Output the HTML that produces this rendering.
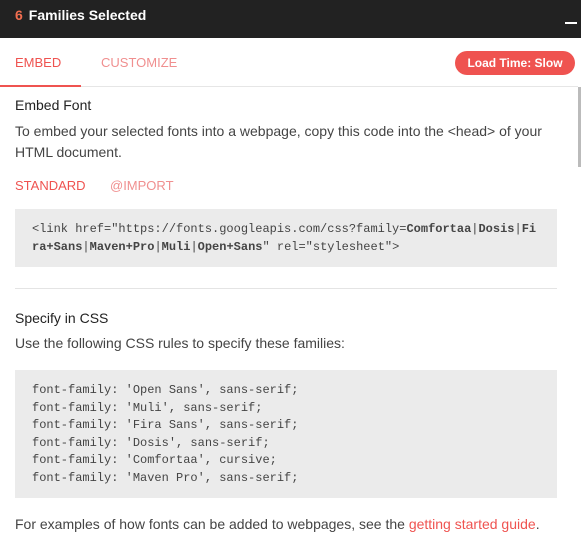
<!DOCTYPE html>
<html><head><style>
body{margin:0;width:581px;height:552px;overflow:hidden;background:#fff;font-family:"Liberation Sans",sans-serif;color:#333;position:relative}
.hd{position:absolute;left:0;top:0;width:581px;height:38px;background:#222}
.hd .t{position:absolute;left:15px;top:7px;color:#fff;font-weight:bold;font-size:14px}
.hd .t b{color:#f26e50;margin-right:6px}
.hd .m{position:absolute;left:565px;top:22px;width:12px;height:2px;background:#fff}
.tabs{position:absolute;top:38px;left:0;width:578px;height:48px;border-bottom:1px solid #e6e6e6}
.tab{position:absolute;top:17px;font-size:13px;color:#ef5350}
.ul{position:absolute;left:0;top:85px;width:81px;height:2px;background:#ef5350}
.pill{position:absolute;left:455px;top:51px;width:120px;height:24px;border-radius:12px;background:#ef5350;color:#fff;font-weight:bold;font-size:12px;text-align:center;line-height:24px}
.sb{position:absolute;left:578px;top:87px;width:3px;height:80px;background:#bbb}
.h{position:absolute;left:15px;font-size:14px;color:#222}
.p{position:absolute;left:15px;font-size:14px;color:#444;line-height:21px}
.code{position:absolute;left:15px;width:542px;background:#ebebeb;font-family:"Liberation Mono",monospace;font-size:12px;color:#444;box-sizing:border-box;padding-left:17px;line-height:17.5px;white-space:pre}
</style></head><body>
<div class="hd"><div class="t"><b>6</b>Families Selected</div><div class="m"></div></div>
<div class="tabs"><div class="tab" style="left:15px">EMBED</div><div class="tab" style="left:101px;color:#f08f8f">CUSTOMIZE</div></div>
<div class="ul"></div>
<div class="pill">Load Time: Slow</div>
<div class="sb"></div>
<div class="h" style="top:97px">Embed Font</div>
<div class="p" style="top:121px;width:545px">To embed your selected fonts into a webpage, copy this code into the &lt;head&gt; of your HTML document.</div>
<div class="tab" style="position:absolute;left:15px;top:178px;font-size:13px;color:#ef5350">STANDARD</div>
<div class="tab" style="position:absolute;left:110px;top:178px;font-size:13px;color:#f08f8f">@IMPORT</div>
<div class="code" style="top:209px;height:58px;padding-top:12px">&lt;link href="https://fonts.googleapis.com/css?family=<b>Comfortaa</b>|<b>Dosis</b>|<b>Fi</b>
<b>ra+Sans</b>|<b>Maven+Pro</b>|<b>Muli</b>|<b>Open+Sans</b>" rel="stylesheet"&gt;</div>
<div style="position:absolute;left:15px;top:288px;width:542px;height:1px;background:#e4e4e4"></div>
<div class="h" style="top:310px">Specify in CSS</div>
<div class="p" style="top:333px">Use the following CSS rules to specify these families:</div>
<div class="code" style="top:370px;height:128px;padding-top:12px">font-family: 'Open Sans', sans-serif;
font-family: 'Muli', sans-serif;
font-family: 'Fira Sans', sans-serif;
font-family: 'Dosis', sans-serif;
font-family: 'Comfortaa', cursive;
font-family: 'Maven Pro', sans-serif;</div>
<div class="p" style="top:514px">For examples of how fonts can be added to webpages, see the <span style="color:#ef5350">getting started guide</span>.</div>
</body></html>
